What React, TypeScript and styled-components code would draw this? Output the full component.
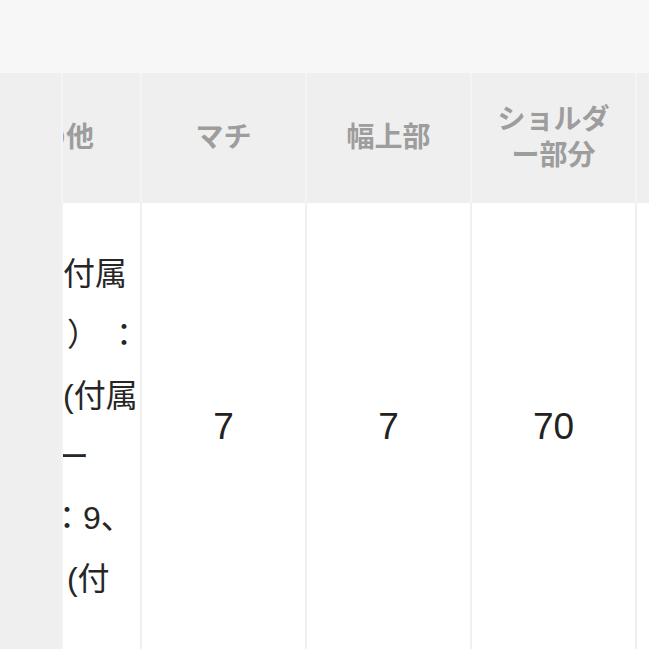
import { useLayoutEffect, useRef } from 'react'
import styled, { createGlobalStyle } from 'styled-components'

const GlobalStyle = createGlobalStyle`
  html, body {
    margin: 0;
    padding: 0;
    overflow: hidden;
    background: #ffffff;
  }
  body {
    font-family: 'Liberation Sans', 'Noto Sans CJK JP', sans-serif;
  }
`

const Page = styled.div`
  width: 649px;
  background: #f7f7f7;
`

const TopBand = styled.div`
  height: 73px;
  background: #f7f7f7;
`

const Scroller = styled.div`
  width: 100%;
  overflow-x: auto;
  scrollbar-width: none;
  &::-webkit-scrollbar {
    display: none;
  }
`

const SpecTable = styled.table`
  table-layout: fixed;
  border-collapse: separate;
  border-spacing: 0;
  width: max-content;
`

const HeadCell = styled.th<{ $width: number }>`
  width: ${({ $width }) => $width}px;
  height: 130px;
  padding: 0 16px;
  box-sizing: border-box;
  background: #efefef;
  border-right: 2px solid #f4f4f4;
  color: #9d9d9d;
  font-size: 28px;
  line-height: 36px;
  font-weight: 700;
  text-align: center;
  vertical-align: middle;
  line-break: anywhere;
  overflow: hidden;
`

const StickyHead = styled(HeadCell)`
  position: sticky;
  left: 0;
  z-index: 2;
  padding: 0;
`

const BodyCell = styled.td<{ $width: number }>`
  width: ${({ $width }) => $width}px;
  height: 447px;
  padding: 0;
  box-sizing: border-box;
  background: #ffffff;
  border-right: 2px solid #f0f0f0;
  color: #222222;
  font-size: 37px;
  text-align: center;
  vertical-align: middle;
  overflow: hidden;
`

const StickyBody = styled(BodyCell)`
  position: sticky;
  left: 0;
  z-index: 2;
  background: #efefef;
  border-right-color: #f3f3f3;
`

const NoteCell = styled(BodyCell)`
  padding-left: 35px;
  text-align: left;
  font-size: 32px;
  color: #262626;
`

const NoteLine = styled.div<{ $shift: number }>`
  height: 61px;
  line-height: 61px;
  margin-left: ${({ $shift }) => $shift}px;
  white-space: nowrap;
`

const columns = [
  { key: 'machi', label: 'マチ', value: '7' },
  { key: 'width', label: '幅上部', value: '7' },
  { key: 'shoulder', label: 'ショルダー部分', value: '70' },
  { key: 'next', label: '', value: '' },
]

const notes = [
  { text: '本体付属', shift: 0 },
  { text: 'ット） ：', shift: 4 },
  { text: '寸法(付属', shift: 0 },
  { text: 'ルダー', shift: -6 },
  { text: '長さ：9、', shift: -12 },
  { text: '属品 (付', shift: -5 },
]

export default function App() {
  const scrollRef = useRef<HTMLDivElement>(null)

  // the table is shown scrolled to the right, with the first column pinned
  useLayoutEffect(() => {
    if (scrollRef.current) scrollRef.current.scrollLeft = 99
  }, [])

  return (
    <Page>
      <GlobalStyle />
      <TopBand />
      <Scroller ref={scrollRef}>
        <SpecTable>
          <thead>
            <tr>
              <StickyHead $width={63} />
              <HeadCell $width={178}>その他</HeadCell>
              {columns.map((col) => (
                <HeadCell key={col.key} $width={165}>
                  {col.label}
                </HeadCell>
              ))}
            </tr>
          </thead>
          <tbody>
            <tr>
              <StickyBody $width={63} />
              <NoteCell $width={178}>
                {notes.map((line, i) => (
                  <NoteLine key={i} $shift={line.shift}>
                    {line.text}
                  </NoteLine>
                ))}
              </NoteCell>
              {columns.map((col) => (
                <BodyCell key={col.key} $width={165}>
                  {col.value}
                </BodyCell>
              ))}
            </tr>
          </tbody>
        </SpecTable>
      </Scroller>
    </Page>
  )
}
